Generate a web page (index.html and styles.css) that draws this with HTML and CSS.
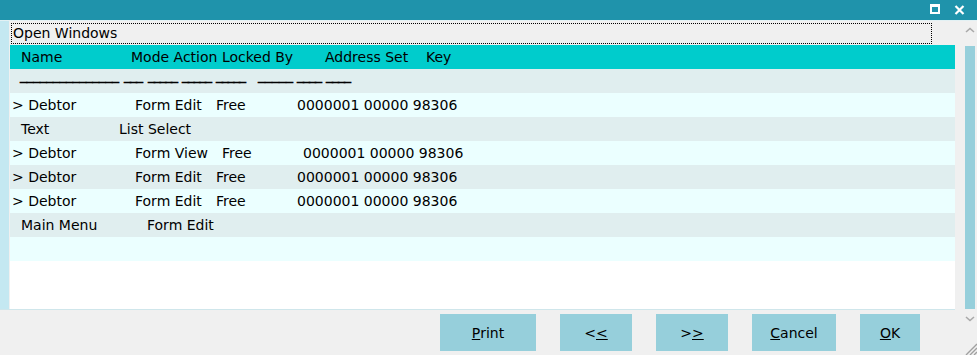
FILE: index.html
```html
<!DOCTYPE html>
<html>
<head>
<meta charset="utf-8">
<title>Open Windows</title>
<link rel="stylesheet" href="styles.css">
</head>
<body>
<div class="window">
  <div class="titlebar">
    <svg class="tb-max" width="10" height="10" viewBox="0 0 10 10"><path d="M0 0H10V10H0Z M2 3V8H8V3Z" fill="#fff" fill-rule="evenodd"/></svg>
    <svg class="tb-close" width="11" height="10" viewBox="0 0 11 10"><path d="M1.5 1L9.5 9M9.5 1L1.5 9" stroke="#fff" stroke-width="2.2"/></svg>
  </div>
  <div class="main">
    <div class="left">
      <div class="pane">
        <div class="strip"></div>
        <div class="content">
          <div class="caption">Open Windows</div>
          <div class="list">
            <div class="row head">
              <span class="h-name">Name</span><span class="h-mode">Mode Action Locked By</span><span class="h-addr">Address Set</span><span>Key</span>
            </div>
            <div class="row b rules">
              <span class="u u-long">_______________</span><span class="u u-2">___</span><span class="u u-3">_____</span><span class="u u-3">_____</span><span class="u u-3 u-last3">_____</span><span class="u u-5">_____</span><span class="u u-4">____</span><span class="u u-4">____</span>
            </div>
            <div class="row a item">
              <span class="c-name">&gt; Debtor</span><span class="c-mode">Form Edit</span><span class="c-lock">Free</span><span>0000001 00000 98306</span>
            </div>
            <div class="row b plain">
              <span class="p-text">Text</span><span>List Select</span>
            </div>
            <div class="row a item">
              <span class="c-name">&gt; Debtor</span><span class="c-mode wide">Form View</span><span class="c-lock">Free</span><span>0000001 00000 98306</span>
            </div>
            <div class="row b item">
              <span class="c-name">&gt; Debtor</span><span class="c-mode">Form Edit</span><span class="c-lock">Free</span><span>0000001 00000 98306</span>
            </div>
            <div class="row a item">
              <span class="c-name">&gt; Debtor</span><span class="c-mode">Form Edit</span><span class="c-lock">Free</span><span>0000001 00000 98306</span>
            </div>
            <div class="row b plain">
              <span class="p-menu">Main Menu</span><span>Form Edit</span>
            </div>
            <div class="row a"></div>
          </div>
        </div>
      </div>
      <div class="footer">
        <button class="btn btn-print"><u>P</u>rint</button>
        <button class="btn btn-nav">&lt;<u>&lt;</u></button>
        <button class="btn btn-nav">&gt;<u>&gt;</u></button>
        <button class="btn btn-cancel"><u>C</u>ancel</button>
        <button class="btn btn-ok"><u>O</u>K</button>
      </div>
    </div>
    <div class="vscroll">
      <div class="sb-up"><svg width="10" height="6" viewBox="0 0 10 6"><path d="M1 5L5 1.5L9 5" fill="none" stroke="#a9a9a9" stroke-width="1.6"/></svg></div>
      <div class="sb-thumb"></div>
      <div class="sb-down"><svg width="10" height="6" viewBox="0 0 10 6"><path d="M1 1L5 4.5L9 1" fill="none" stroke="#a9a9a9" stroke-width="1.6"/></svg></div>
      <svg class="sb-grip" width="12" height="12" viewBox="0 0 12 12"><path d="M12 1L1 12M12 5L5 12M12 9L9 12" stroke="#a0a0a0" stroke-width="1.4"/></svg>
    </div>
  </div>
</div>
</body>
</html>
```

FILE: styles.css
```css
* {
  box-sizing: border-box;
}

html,
body {
  margin: 0;
  padding: 0;
}

body {
  width: 977px;
  height: 355px;
  overflow: hidden;
  background: #f0f0f0;
  font-family: "DejaVu Sans", sans-serif;
  font-size: 14px;
  color: #000;
}

.window {
  display: flex;
  flex-direction: column;
  height: 355px;
}

.titlebar {
  height: 21px;
  flex: none;
  background: #1f93ab;
  border-bottom: 1px solid #e3f1f4;
  display: flex;
  justify-content: flex-end;
  align-items: flex-start;
  gap: 14px;
  padding: 4px 12px 0 0;
}

.tb-close {
  margin-top: 1px;
}

.main {
  flex: 1;
  display: flex;
}

.left {
  width: 955px;
  display: flex;
  flex-direction: column;
}

.pane {
  height: 289px;
  flex: none;
  display: flex;
  border-bottom: 1px solid #cfe6eb;
}

.strip {
  width: 9px;
  margin-right: 1px;
  background: #c4e8f1;
}

.content {
  flex: 1;
  display: flex;
  flex-direction: column;
}

.caption {
  width: 921px;
  height: 21px;
  margin: 2px 0 1px 1px;
  padding-left: 1px;
  border: 1px dotted #000;
  line-height: 19px;
}

.list {
  flex: 1;
  background: #fff;
}

.row {
  height: 24px;
  display: flex;
  align-items: center;
  white-space: pre;
}

.row.head {
  background: #00cccc;
  padding-left: 11px;
}

.a {
  background: #ebffff;
}

.b {
  background: #e0eeef;
}

.h-name {
  width: 110px;
}

.h-mode {
  width: 194px;
}

.h-addr {
  width: 101px;
}

.rules {
  align-items: flex-start;
  padding-left: 10px;
}

.u {
  display: block;
  flex: none;
  line-height: 13px;
  height: 16px;
  -webkit-text-stroke: 0.4px #000;
}

.u-long {
  letter-spacing: -0.43px;
  margin-right: 5.4px;
}

.u-2 {
  letter-spacing: -1px;
  margin-right: 6px;
}

.u-3 {
  letter-spacing: -1.25px;
  margin-right: 5.25px;
}

.u-3.u-last3 {
  margin-right: 13.25px;
}

.u-5 {
  letter-spacing: 0;
  margin-right: 4px;
}

.u-4 {
  letter-spacing: -1px;
  margin-right: 5px;
}

.item {
  padding-left: 2px;
}

.c-name {
  width: 123px;
}

.c-mode {
  width: 81px;
}

.c-mode.wide {
  width: 87px;
}

.c-lock {
  width: 81px;
}

.plain {
  padding-left: 11px;
}

.p-text {
  width: 98px;
}

.p-menu {
  width: 126px;
}

.footer {
  flex: 1;
  display: flex;
  justify-content: flex-end;
  align-items: flex-start;
  gap: 24px;
  padding: 4px 35px 0 0;
}

.btn {
  height: 37px;
  border: 0;
  margin: 0;
  padding: 0;
  background: #96cfdb;
  font: inherit;
  color: #000;
  display: flex;
  align-items: center;
  justify-content: center;
}

.btn-print {
  width: 96px;
}

.btn-nav {
  width: 72px;
}

.btn-cancel {
  width: 84px;
}

.btn-ok {
  width: 60px;
}

.vscroll {
  width: 20px;
  margin-left: 2px;
  padding-left: 8px;
  display: flex;
  flex-direction: column;
}

.sb-up {
  height: 25px;
  padding-top: 6px;
}

.sb-up svg,
.sb-down svg {
  display: block;
}

.sb-thumb {
  width: 10px;
  height: 263px;
  background: #96cfdb;
}

.sb-down {
  padding-top: 7px;
}

.sb-grip {
  display: block;
  margin-top: auto;
}
```
